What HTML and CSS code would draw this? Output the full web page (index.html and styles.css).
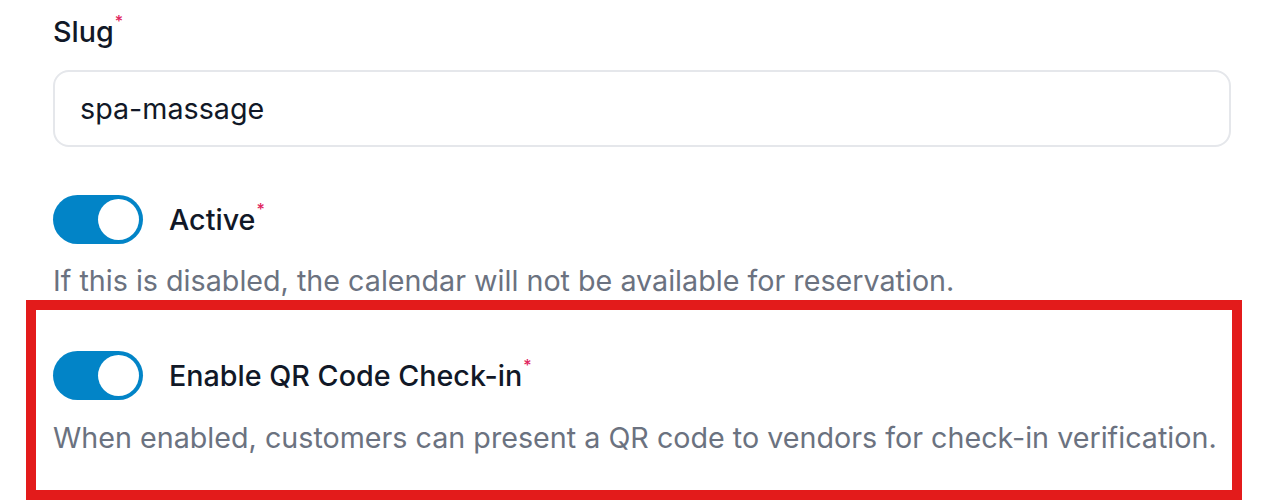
FILE: index.html
```html
<!DOCTYPE html>
<html lang="en">
  <head>
    <meta charset="UTF-8" />
    <meta name="viewport" content="width=device-width, initial-scale=1.0" />
    <title>Calendar settings</title>
    <link rel="stylesheet" href="styles.css">
  </head>
  <body>
    <form class="form">
      <div class="field">
        <label class="label" for="slug">Slug<sup class="req">*</sup></label>
        <div class="input-wrap">
          <input id="slug" class="input" type="text" value="spa-massage" />
        </div>
      </div>

      <div class="field toggle-field">
        <div class="toggle-row">
          <span class="toggle is-on"><span class="knob"></span></span>
          <span class="label">Active<sup class="req">*</sup></span>
        </div>
        <p class="hint">If this is disabled, the calendar will not be available for reservation.</p>
      </div>

      <div class="highlight">
        <div class="field toggle-field">
          <div class="toggle-row">
            <span class="toggle is-on"><span class="knob"></span></span>
            <span class="label">Enable QR Code Check-in<sup class="req">*</sup></span>
          </div>
          <p class="hint">When enabled, customers can present a QR code to vendors for check-in verification.</p>
        </div>
      </div>
    </form>
  </body>
</html>
```

FILE: styles.css
```css
body {
  margin: 0;
  background-color: #fff;
  font-family: "Inter", "Noto Sans", sans-serif;
  color: #030712;
  overflow: hidden;
}

.form {
  width: 1178px;
  padding: 12px 0 0 53px;
  display: flex;
  flex-direction: column;
}

.field {
  display: flex;
  flex-direction: column;
}

.label {
  font-size: 28.7px;
  font-weight: 500;
  line-height: 40px;
  color: #111827;
}

.req {
  color: #e0245e;
  font-size: 16px;
  font-weight: 500;
  vertical-align: top;
  line-height: 1;
  margin-left: 1px;
  position: relative;
  top: 1px;
}

.input-wrap {
  margin-top: 18px;
  height: 77px;
  box-sizing: border-box;
  border: 2px solid #e5e7eb;
  border-radius: 16px;
  display: flex;
  align-items: center;
  padding: 0 25px;
}

.input {
  border: none;
  outline: none;
  padding: 0;
  width: 100%;
  font-family: inherit;
  font-size: 28.7px;
  line-height: 40px;
  color: #111827;
  background: transparent;
}

.toggle-field {
  margin-top: 48px;
}

.toggle-row {
  display: flex;
  align-items: center;
  gap: 26px;
  height: 49px;
}

.toggle {
  width: 90px;
  height: 49px;
  box-sizing: border-box;
  border-radius: 999px;
  background-color: #e5e7eb;
  padding: 4px;
  display: flex;
}

.toggle.is-on {
  background-color: #0284c7;
  justify-content: flex-end;
}

.knob {
  width: 41px;
  height: 41px;
  border-radius: 50%;
  background-color: #fff;
}

.hint {
  margin: 18px 0 0;
  font-size: 28.7px;
  line-height: 38px;
  color: #6b7280;
}

.highlight {
  margin: 0 -11px 0 -27px;
  border: 10px solid #e31b1b;
  padding: 0 0 32px 17px;
}

.highlight .toggle-field {
  margin-top: 41px;
}

.highlight .hint {
  line-height: 40px;
}
```
